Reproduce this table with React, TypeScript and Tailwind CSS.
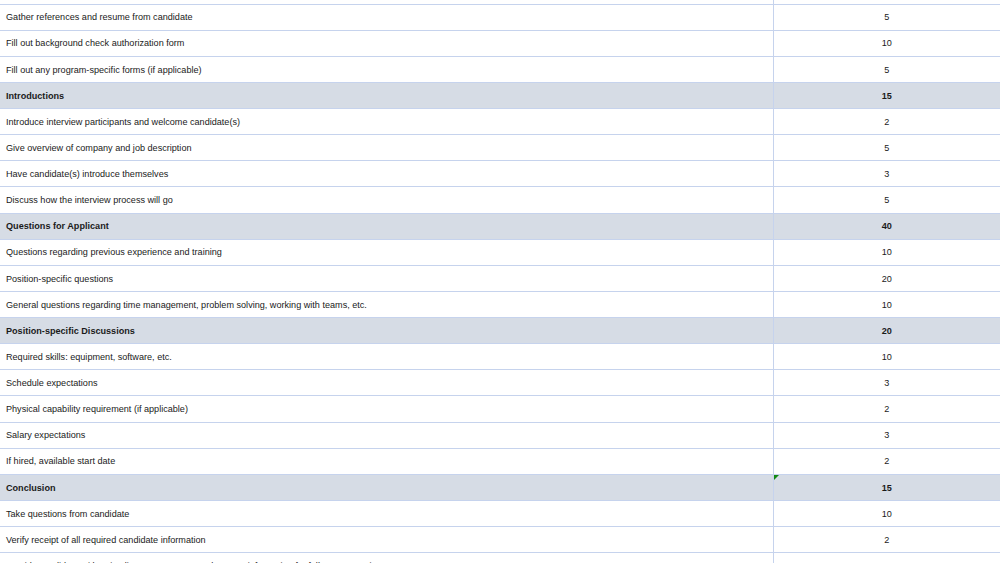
import React from "react";

type Row = { label: string; value: string; section?: boolean; flag?: boolean };

const rows: Row[] = [
  { label: "Gather references and resume from candidate", value: "5" },
  { label: "Fill out background check authorization form", value: "10" },
  { label: "Fill out any program-specific forms (if applicable)", value: "5" },
  { label: "Introductions", value: "15", section: true },
  { label: "Introduce interview participants and welcome candidate(s)", value: "2" },
  { label: "Give overview of company and job description", value: "5" },
  { label: "Have candidate(s) introduce themselves", value: "3" },
  { label: "Discuss how the interview process will go", value: "5" },
  { label: "Questions for Applicant", value: "40", section: true },
  { label: "Questions regarding previous experience and training", value: "10" },
  { label: "Position-specific questions", value: "20" },
  { label: "General questions regarding time management, problem solving, working with teams, etc.", value: "10" },
  { label: "Position-specific Discussions", value: "20", section: true },
  { label: "Required skills: equipment, software, etc.", value: "10" },
  { label: "Schedule expectations", value: "3" },
  { label: "Physical capability requirement (if applicable)", value: "2" },
  { label: "Salary expectations", value: "3" },
  { label: "If hired, available start date", value: "2" },
  { label: "Conclusion", value: "15", section: true, flag: true },
  { label: "Take questions from candidate", value: "10" },
  { label: "Verify receipt of all required candidate information", value: "2" },
  { label: "Provide candidate with a timeline on next steps and contact information for follow-up questions", value: "1" },
];

export default function App() {
  return (
    <div
      className="w-[1000px] h-[563px] overflow-hidden bg-white text-[#1a1a1a]"
      style={{ fontFamily: '"Liberation Sans", Arial, Helvetica, sans-serif' }}
    >
      <div className="flex h-[4.6px] border-b border-[#c6d3ed] box-border">
        <div className="w-[773.5px] border-r border-[#c6d3ed]" />
        <div className="flex-1" />
      </div>
      {rows.map((r, i) => (
        <div
          key={i}
          className={`flex h-[26.13px] box-border border-b border-[#c6d3ed] text-[9.1px] ${
            r.section ? "bg-[#d6dce5] font-bold" : "bg-white"
          }`}
        >
          <div className="w-[773.5px] shrink-0 border-r border-[#c6d3ed] flex items-center pl-[6px] pt-[2px] whitespace-nowrap overflow-hidden">
            {r.label}
          </div>
          <div className="relative flex-1 flex items-center justify-center pt-[2px]">
            {r.flag && (
              <div className="absolute left-0 top-0 w-0 h-0 border-t-[5px] border-t-[#138a13] border-r-[5px] border-r-transparent" />
            )}
            {r.value}
          </div>
        </div>
      ))}
    </div>
  );
}
